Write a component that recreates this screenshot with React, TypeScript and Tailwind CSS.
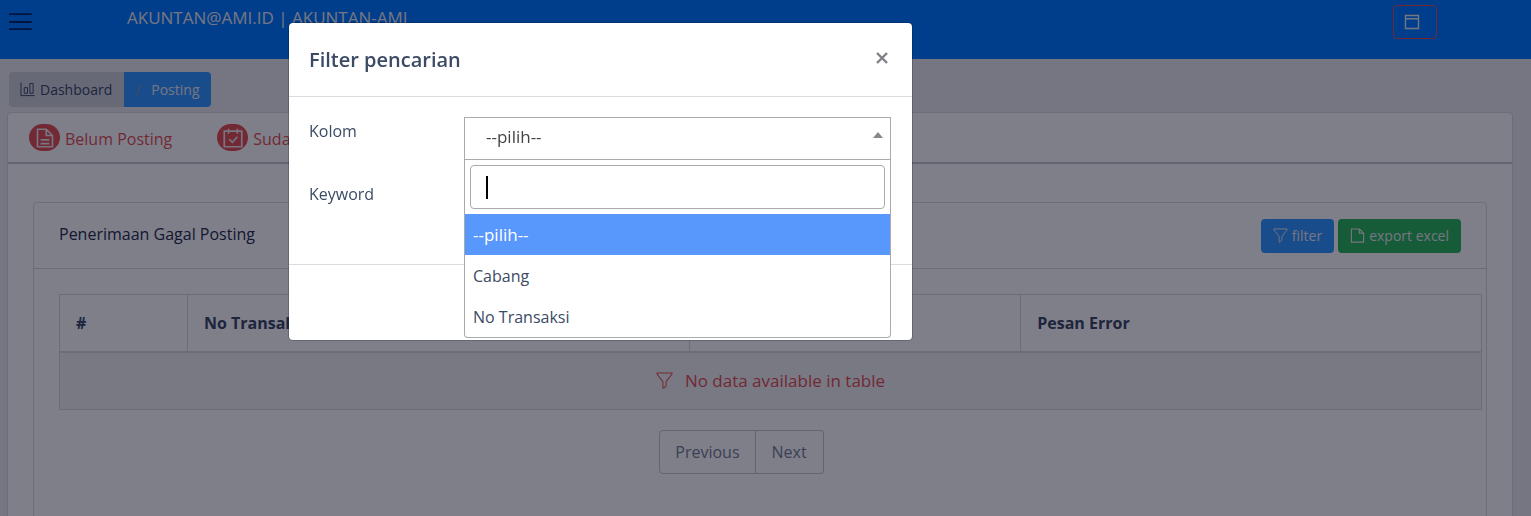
import { useState, type ReactNode } from "react";

type IconProps = { className?: string };

function Icon({ className = "", children }: IconProps & { children: ReactNode }) {
  return (
    <svg
      viewBox="0 0 32 32"
      fill="none"
      stroke="currentColor"
      strokeWidth="2"
      strokeMiterlimit="10"
      aria-hidden="true"
      className={`shrink-0 ${className}`}
    >
      {children}
    </svg>
  );
}

function MenuIcon({ className }: IconProps) {
  return (
    <Icon className={className}>
      <path d="M2.5 5.5h28M2.5 16h28M2.5 25.5h28" strokeWidth="2.6" strokeLinecap="round" />
    </Icon>
  );
}

function ChartIcon({ className }: IconProps) {
  return (
    <Icon className={className}>
      <path d="M2 1v28h29M9 12h7v12H9zM21 3h7v21h-7z" />
    </Icon>
  );
}

function DescriptionIcon({ className }: IconProps) {
  return (
    <Icon className={className}>
      <path d="M4 2h14l10 10v18H4zM18 2v10h10M9 19h14M9 25h14" strokeWidth="2.6" />
    </Icon>
  );
}

function CalendarCheckIcon({ className }: IconProps) {
  return (
    <Icon className={className}>
      <path d="M2 5h28v25H2zM9 1v8M23 1v8M10 18l5 5 8-9" strokeWidth="2.6" />
    </Icon>
  );
}

function WindowIcon({ className }: IconProps) {
  return (
    <Icon className={className}>
      <path d="M3 3h26v26H3zM3 9.5h26" strokeWidth="2.8" />
    </Icon>
  );
}

function FilterIcon({ className }: IconProps) {
  return (
    <Icon className={className}>
      <path d="M2 2h28v2L19 18v8l-4 4h-2V18L2 4z" />
    </Icon>
  );
}

function FileIcon({ className }: IconProps) {
  return (
    <Icon className={className}>
      <path d="M3 2h17l9 9v19H3zM20 2v9h9" strokeWidth="2.4" />
    </Icon>
  );
}

function Header() {
  return (
    <header className="flex h-[59px] items-start bg-[#007bff] text-[#ebedef]">
      <button type="button" aria-label="Menu" className="mt-2.5 ml-2 text-[#00286b]">
        <MenuIcon className="size-6" />
      </button>
      <p className="mt-1.5 ml-[95px] text-[17px] leading-6">AKUNTAN@AMI.ID | AKUNTAN-AMI</p>
      <button
        type="button"
        aria-label="Window"
        className="mt-[5px] mr-[94px] ml-auto flex h-[34px] w-11 items-center rounded border border-[#e55353] pl-2.5"
      >
        <WindowIcon className="size-4" />
      </button>
    </header>
  );
}

function Breadcrumb() {
  return (
    <nav aria-label="Breadcrumb" className="ml-0.5 flex h-[35px] w-fit overflow-hidden rounded text-sm">
      <a href="#dashboard" className="flex items-center gap-[5px] bg-[#ced2d8] pr-3 pl-[11px]">
        <ChartIcon className="size-[15px]" />
        Dashboard
      </a>
      <a href="#posting" className="flex items-center bg-[#3399ff] pr-3 pl-[11px] text-[#ebedef]">
        <span className="w-4 text-[#8a93a2]">/</span>
        Posting
      </a>
    </nav>
  );
}

function Tab({ href, icon, children }: { href: string; icon: ReactNode; children: ReactNode }) {
  return (
    <a href={href} className="flex items-center gap-[5px] text-base text-[#e55353]">
      <span className="flex h-[27px] w-[31px] items-center justify-center rounded-full bg-[#e55353] text-[#ebedef]">
        {icon}
      </span>
      <span className="pt-0.5">{children}</span>
    </a>
  );
}

function ErrorTable() {
  return (
    <table className="w-full table-fixed border-collapse border border-[#d8dbe0] text-left text-base">
      <thead>
        <tr className="h-[57px] border-b-2 border-[#d8dbe0]">
          <th className="w-[9%] border-r border-[#d8dbe0] px-4">#</th>
          <th className="w-[35.3%] border-r border-[#d8dbe0] px-4">No Transaksi</th>
          <th className="w-[23.3%] border-r border-[#d8dbe0] px-4">Cabang</th>
          <th className="px-4">Pesan Error</th>
        </tr>
      </thead>
      <tbody>
        <tr className="h-[58px] bg-[#f2f2f2] text-[17px] text-[#e55353]">
          <td colSpan={4}>
            <div className="flex items-center justify-center gap-3">
              <FilterIcon className="size-[17px]" />
              No data available in table
            </div>
          </td>
        </tr>
      </tbody>
    </table>
  );
}

function Page() {
  return (
    <div className="min-h-screen bg-[#ebedef]">
      <Header />
      <main className="pt-[13px] pr-[18px] pl-[7px]">
        <Breadcrumb />
        <section className="mt-[5px] rounded border border-[#d8dbe0] bg-white">
          <div className="flex h-[51px] items-center gap-[45px] border-b-2 border-[#c4c9d0] pl-[21px]">
            <Tab href="#belum" icon={<DescriptionIcon className="size-5" />}>
              Belum Posting
            </Tab>
            <Tab href="#sudah" icon={<CalendarCheckIcon className="size-5" />}>
              Sudah
            </Tab>
          </div>
          <div className="px-[25px] pt-[38px]">
            <section className="rounded border border-[#d8dbe0] pb-16">
              <div className="flex h-[66px] items-center border-b border-[#d8dbe0] px-[25px]">
                <h2 className="pb-1 text-base text-[#2a3048]">Penerimaan Gagal Posting</h2>
                <div className="ml-auto flex gap-1 text-sm text-[#ebedef]">
                  <button type="button" className="flex h-[34px] items-center gap-1 rounded bg-[#3399ff] px-3">
                    <FilterIcon className="size-[15px]" />
                    filter
                  </button>
                  <button type="button" className="flex h-[34px] items-center gap-1 rounded bg-[#2eb85c] px-3">
                    <FileIcon className="size-[15px]" />
                    export excel
                  </button>
                </div>
              </div>
              <div className="pt-[25px] pr-1 pl-[25px]">
                <ErrorTable />
                <div className="mt-5 mr-[58px] flex justify-center text-base text-[#768192]">
                  <button type="button" className="h-11 rounded-l border border-[#c4c9d0] px-[15px]">
                    Previous
                  </button>
                  <button type="button" className="h-11 rounded-r border border-l-0 border-[#c4c9d0] px-4">
                    Next
                  </button>
                </div>
              </div>
            </section>
          </div>
        </section>
      </main>
    </div>
  );
}

const columns = ["--pilih--", "Cabang", "No Transaksi"];

function ColumnSelect() {
  const [value, setValue] = useState(columns[0]);
  const [query, setQuery] = useState("");
  const shown = columns.filter((c) => c.toLowerCase().includes(query.toLowerCase()));
  return (
    <div className="relative self-start">
      <select
        id="kolom"
        value={value}
        onChange={(e) => setValue(e.target.value)}
        className="block h-[43px] w-full appearance-none border border-[#aaaaaa] bg-white pr-8 pb-1 pl-[21px] text-[17px] text-[#444444] outline-none"
      >
        {columns.map((c) => (
          <option key={c}>{c}</option>
        ))}
      </select>
      <svg
        viewBox="0 0 10 6"
        aria-hidden="true"
        className="pointer-events-none absolute top-[15px] right-2 h-1.5 w-2.5 fill-[#888888]"
      >
        <path d="M0 6 5 0l5 6z" />
      </svg>
      <div className="absolute inset-x-0 top-full z-10 rounded-b border border-t-0 border-[#aaaaaa] bg-white">
        <div className="relative p-[5px]">
          <input
            type="text"
            aria-label="Cari kolom"
            value={query}
            onChange={(e) => setQuery(e.target.value)}
            className="block h-11 w-full rounded border border-[#aaaaaa] px-4 text-base outline-none"
          />
          {query === "" && <span className="absolute top-4 left-[21px] h-[23px] w-0.5 bg-black" />}
        </div>
        <div role="listbox" aria-label="Kolom">
          {shown.map((c) => (
            <button
              key={c}
              type="button"
              role="option"
              aria-selected={c === value}
              onClick={() => setValue(c)}
              className="block h-[41px] w-full px-2 text-left text-base aria-selected:bg-[#5897fb] aria-selected:text-[17px] aria-selected:text-white"
            >
              {c}
            </button>
          ))}
        </div>
      </div>
    </div>
  );
}

function FilterDialog() {
  return (
    <div className="fixed inset-0 overflow-y-auto bg-[#000015]/50 pt-[23px] pr-4 pl-[289px]">
      <div
        role="dialog"
        aria-modal="true"
        aria-labelledby="dialog-title"
        className="max-w-[623px] rounded bg-white shadow-[0_0_0_1px_rgba(0,0,21,0.2)]"
      >
        <div className="flex h-[74px] items-center justify-between border-b border-[#d8dbe0] px-5">
          <h1 id="dialog-title" className="text-xl font-semibold">
            Filter pencarian
          </h1>
          <button type="button" aria-label="Tutup" className="mb-1 p-1 text-[#808088]">
            <svg viewBox="0 0 12 12" className="size-3 stroke-current" strokeWidth="2.4" aria-hidden="true">
              <path d="M1 1l10 10M11 1L1 11" />
            </svg>
          </button>
        </div>
        <div className="grid h-[168px] grid-cols-[155px_1fr] grid-rows-[63px_43px] border-b border-[#d8dbe0] pt-5 pr-[21px] pl-5 text-base">
          <label htmlFor="kolom" className="pt-0.5 leading-6">
            Kolom
          </label>
          <ColumnSelect />
          <label htmlFor="keyword" className="pt-0.5 leading-6">
            Keyword
          </label>
          <input id="keyword" type="text" className="h-[43px] rounded border border-[#d8dbe0] px-3" />
        </div>
        <div className="h-[75px]" />
      </div>
    </div>
  );
}

export default function App() {
  return (
    <div className="h-screen overflow-hidden font-['Open_Sans',sans-serif] text-[#3c4b64]">
      <Page />
      <FilterDialog />
    </div>
  );
}
